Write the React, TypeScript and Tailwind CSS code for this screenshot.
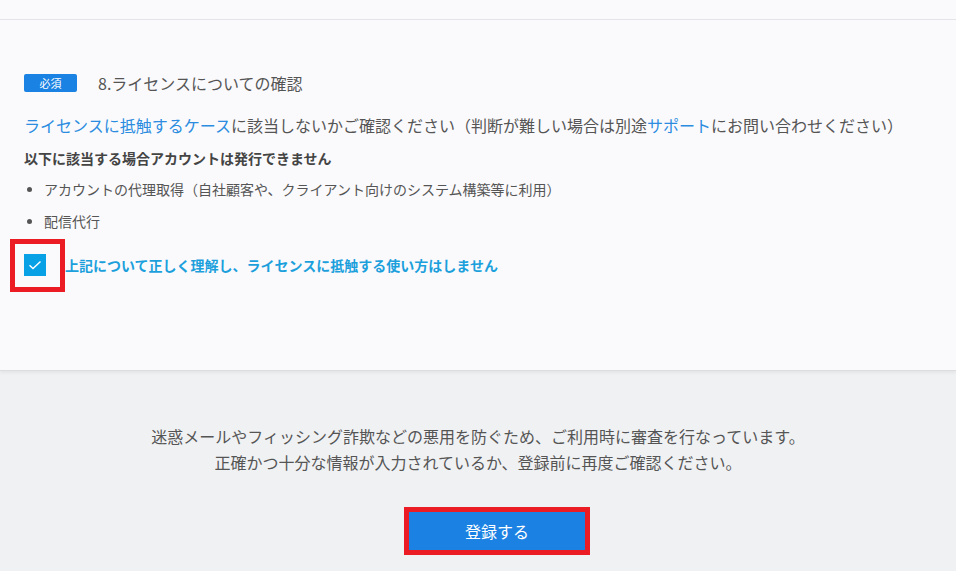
import React from 'react';

const font = { fontFamily: '"Noto Sans CJK JP", "Noto Sans", sans-serif' };

const bullets = ['アカウントの代理取得（自社顧客や、クライアント向けのシステム構築等に利用）', '配信代行'];

const App = () => {
  return (
    <div className="w-[956px] h-[571px] overflow-hidden bg-[#f0f1f3] text-[#555]" style={font}>
      <div className="h-[20px] bg-[#fafafc] border-b border-[#e4e4e8]" />

      <section className="relative z-10 bg-[#fafafc] px-6 pt-[54px] pb-[94px] border-b border-[#dcdde1] shadow-[0_2px_3px_rgba(0,0,0,0.05)]">
        <div className="flex items-center h-[18px]">
          <span className="flex items-center justify-center w-[53px] h-[18px] rounded-[2px] bg-[#1a82e2] text-white text-[11px] leading-none">
            必須
          </span>
          <h2 className="ml-[21px] text-[16px] leading-6 text-[#555]">8.ライセンスについての確認</h2>
        </div>

        <p className="mt-[21px] text-[16px] leading-6 text-[#555] whitespace-nowrap">
          <a className="text-[#2b8ce0]">ライセンスに抵触するケース</a>
          に該当しないかご確認ください（判断が難しい場合は別途
          <a className="text-[#2b8ce0]">サポート</a>
          にお問い合わせください）
        </p>

        <p className="mt-[11px] text-[14px] leading-5 font-bold text-[#444]">以下に該当する場合アカウントは発行できません</p>

        <ul className="mt-[11px] space-y-3">
          {bullets.map((b) => (
            <li key={b} className="flex items-center h-5 text-[14px] leading-5 text-[#555]">
              <span className="ml-[3px] w-[5px] h-[5px] rounded-full bg-[#555]" />
              <span className="ml-3">{b}</span>
            </li>
          ))}
        </ul>

        <label className="mt-[23px] flex items-center">
          <span className="relative flex items-center justify-center w-[22px] h-[22px] bg-[#08a1e6]">
            <svg width="14" height="10" viewBox="0 0 14 10" fill="none">
              <path d="M1.5 5.2 L5 8.5 L12.5 1.5" stroke="white" strokeWidth="1.4" />
            </svg>
            <span className="absolute -left-[14px] -top-[15px] w-[55px] h-[53px] border-[5px] border-[#ec1c24]" />
          </span>
          <span className="ml-[19px] text-[14px] leading-5 font-bold text-[#1ca0dc]">
            上記について正しく理解し、ライセンスに抵触する使い方はしません
          </span>
        </label>
      </section>

      <footer className="flex flex-col items-center pt-[52px]">
        <p className="text-center text-[16px] leading-[26px] text-[#555]">
          迷惑メールやフィッシング詐欺などの悪用を防ぐため、ご利用時に審査を行なっています。
          <br />
          正確かつ十分な情報が入力されているか、登録前に再度ご確認ください。
        </p>
        <button className="relative mt-[37px] ml-[38px] w-[176px] h-[38px] bg-[#1b82e3] text-white text-[16px]">
          登録する
          <span className="absolute -inset-[5px] border-[5px] border-[#ec1c24]" />
        </button>
      </footer>
    </div>
  );
};

export default App;
